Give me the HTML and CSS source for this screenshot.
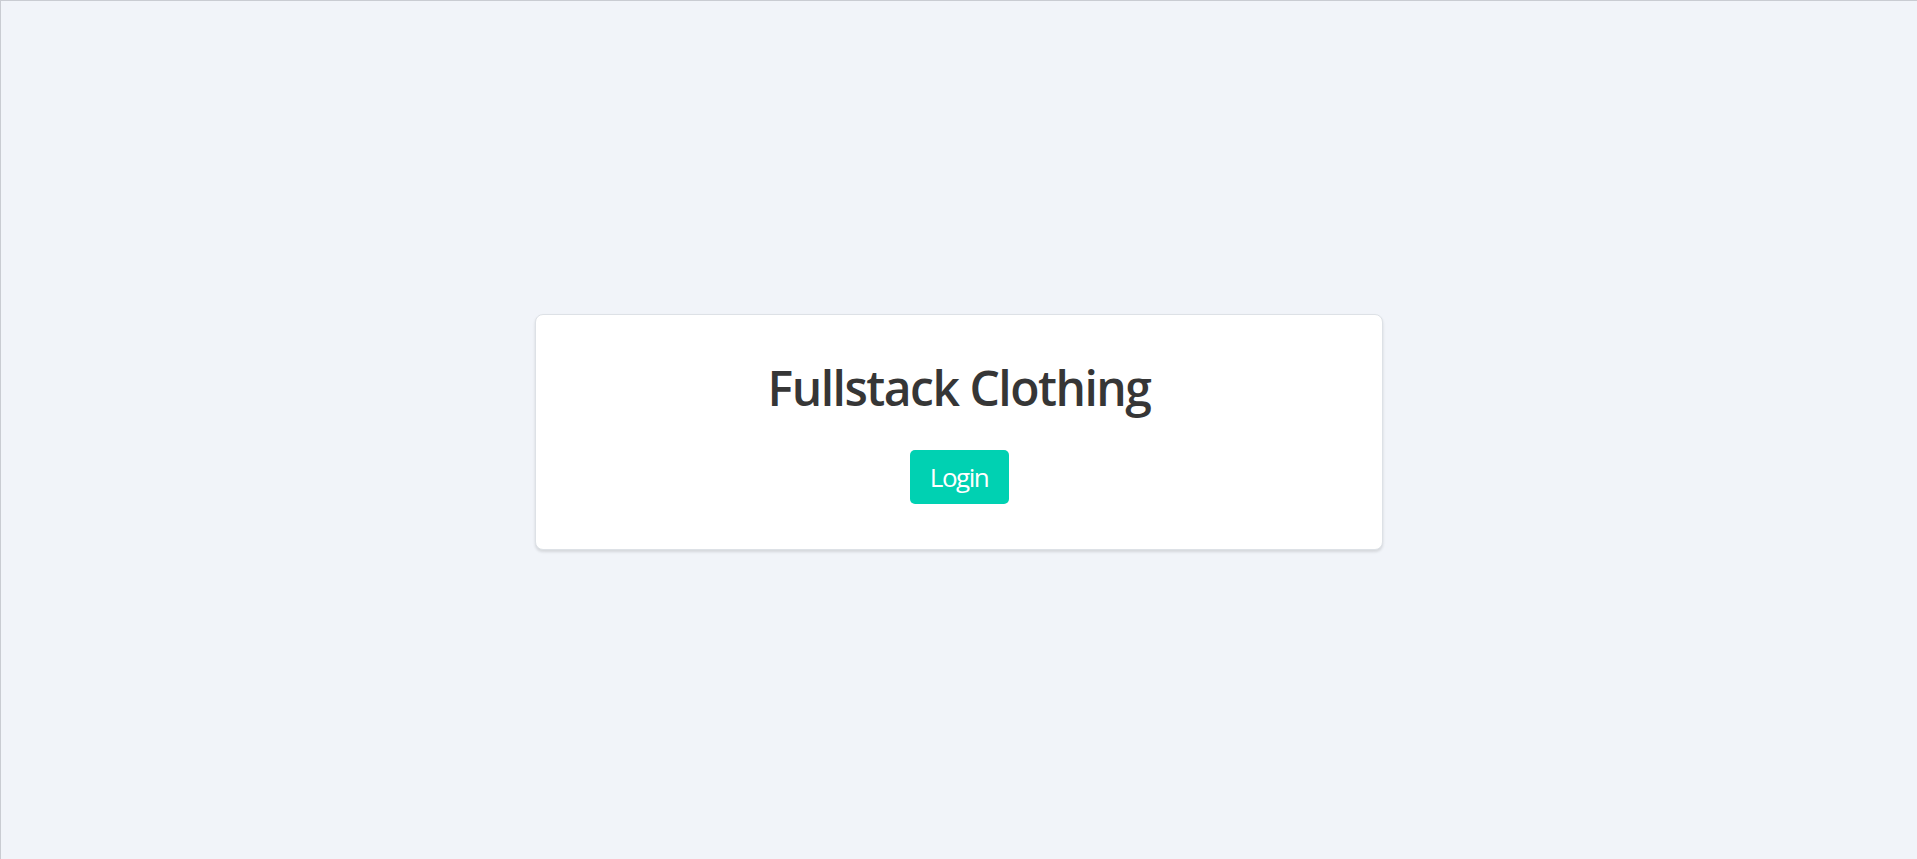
FILE: index.html
```html
<!DOCTYPE html>
<html>
<head>
<meta charset="utf-8">
<link rel="stylesheet" href="styles.css">
</head>
<body>
<main class="page">
  <section class="card">
    <h1 class="title">Fullstack Clothing</h1>
    <button class="btn">Login</button>
  </section>
</main>
</body>
</html>
```
FILE: styles.css
```css
html, body {
  margin: 0;
  padding: 0;
  height: 100%;
}
body {
  background: #f1f4f9;
  font-family: "Open Sans", "Noto Sans", sans-serif;
  box-sizing: border-box;
  border-top: 1px solid #c9ccd2;
  border-left: 1px solid #c9ccd2;
}
.page {
  height: 100%;
  display: flex;
  align-items: center;
  justify-content: center;
}
.card {
  box-sizing: border-box;
  width: 848px;
  height: 236px;
  background: #fff;
  border: 1px solid #dde1e6;
  border-radius: 8px;
  box-shadow: 0 2px 3px rgba(0, 0, 0, 0.12);
  padding: 48px 20px 45px;
  display: flex;
  flex-direction: column;
  align-items: center;
  margin-top: 3px;
}
.title {
  margin: 0;
  font-size: 48px;
  line-height: 49px;
  font-weight: 600;
  letter-spacing: -1.5px;
  color: #363636;
}
.btn {
  margin-top: 38px;
  height: 54px;
  width: 99px;
  border: none;
  border-radius: 5px;
  background: #00d1b2;
  color: #fff;
  font-family: "Open Sans", "Noto Sans", sans-serif;
  font-size: 26px;
  letter-spacing: -1.5px;
  padding: 0;
  display: flex;
  align-items: center;
  justify-content: center;
}
```
